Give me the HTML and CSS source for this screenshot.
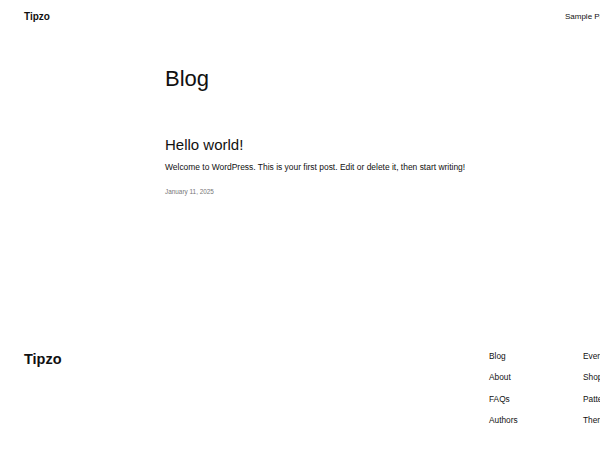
FILE: index.html
```html
<!DOCTYPE html>
<html lang="en">
<head>
    <meta charset="UTF-8">
    <meta name="viewport" content="width=device-width, initial-scale=1.0">
    <title>Blog – Tipzo</title>
    <link rel="stylesheet" href="styles.css">
</head>
<body>
    <header class="site-header">
        <a class="site-title" href="#">Tipzo</a>
        <nav class="site-nav">
            <a href="#">Sample Page</a>
        </nav>
    </header>

    <main class="blog">
        <h1 class="page-title">Blog</h1>

        <article class="post">
            <h2 class="post-title"><a href="#">Hello world!</a></h2>
            <p class="post-excerpt">Welcome to WordPress. This is your first post. Edit or delete it, then start writing!</p>
            <p class="post-date">January 11, 2025</p>
        </article>
    </main>

    <footer class="site-footer">
        <div class="footer-title">Tipzo</div>
        <ul class="footer-col">
            <li><a href="#">Blog</a></li>
            <li><a href="#">About</a></li>
            <li><a href="#">FAQs</a></li>
            <li><a href="#">Authors</a></li>
        </ul>
        <ul class="footer-col">
            <li><a href="#">Events</a></li>
            <li><a href="#">Shop</a></li>
            <li><a href="#">Patterns</a></li>
            <li><a href="#">Themes</a></li>
        </ul>
    </footer>
</body>
</html>
```

FILE: styles.css
```css
* {
    margin: 0;
    padding: 0;
    box-sizing: border-box;
}

html,
body {
    overflow: hidden;
}

body {
    font-family: "Liberation Sans", Arial, sans-serif;
    line-height: 1.2;
    color: #111;
    background: #fff;
    width: 637px;
}

a {
    color: inherit;
    text-decoration: none;
}

ul {
    list-style: none;
}

/* Header */
.site-header {
    display: flex;
    justify-content: space-between;
    align-items: center;
    padding: 11px 24px 0;
}

.site-title {
    font-size: 10px;
    font-weight: bold;
    line-height: 12px;
}

.site-nav {
    font-size: 8px;
}

/* Blog list */
.blog {
    padding-left: 165px;
}

.page-title {
    font-size: 22px;
    font-weight: normal;
    margin-top: 43px;
}

.post-title {
    font-size: 15px;
    font-weight: normal;
    margin-top: 44px;
}

.post-excerpt {
    font-size: 8.45px;
    margin-top: 8px;
}

.post-date {
    font-size: 6.4px;
    color: #777;
    margin-top: 15px;
}

/* Footer */
.site-footer {
    display: grid;
    grid-template-columns: 465px 94px 94px;
    align-items: start;
    padding-left: 24px;
    margin-top: 156px;
}

.footer-title {
    font-size: 14.5px;
    font-weight: bold;
}

.footer-col {
    display: flex;
    flex-direction: column;
    gap: 11.3px;
    padding-top: 1px;
    font-size: 8.3px;
    white-space: nowrap;
}
```
